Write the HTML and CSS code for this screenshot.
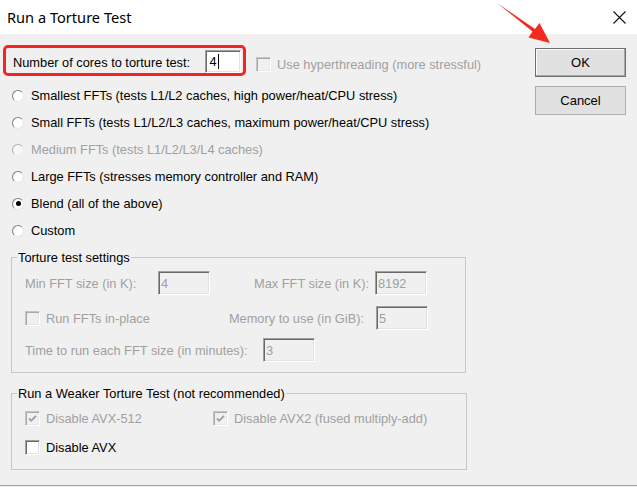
FILE: index.html
```html
<!DOCTYPE html>
<html>
<head>
<meta charset="utf-8">
<title>Run a Torture Test</title>
<link rel="stylesheet" href="styles.css">
</head>
<body>
<div class="window">
  <header class="titlebar">
    <span class="title">Run a Torture Test</span>
    <svg class="close" width="13" height="13" viewBox="0 0 13 13"><path d="M0.5 0.5L12.5 12.5M12.5 0.5L0.5 12.5" stroke="#111" stroke-width="1.1"/></svg>
  </header>
  <div class="content">
    <div class="main">
      <div class="cores-row">
        <div class="highlight">
          <span class="cores-label">Number of cores to torture test:</span>
          <span class="field active">4<span class="caret"></span></span>
        </div>
        <div class="check disabled ht"><span class="box"></span><span>Use hyperthreading (more stressful)</span></div>
      </div>
      <ul class="radios">
        <li class="radio"><span class="dot"></span><span>Smallest FFTs (tests L1/L2 caches, high power/heat/CPU stress)</span></li>
        <li class="radio"><span class="dot"></span><span>Small FFTs (tests L1/L2/L3 caches, maximum power/heat/CPU stress)</span></li>
        <li class="radio disabled"><span class="dot"></span><span>Medium FFTs (tests L1/L2/L3/L4 caches)</span></li>
        <li class="radio"><span class="dot"></span><span>Large FFTs (stresses memory controller and RAM)</span></li>
        <li class="radio checked"><span class="dot"></span><span>Blend (all of the above)</span></li>
        <li class="radio"><span class="dot"></span><span>Custom</span></li>
      </ul>
      <fieldset class="group settings">
        <legend>Torture test settings</legend>
        <div class="frow r1">
          <span class="lbl w-min">Min FFT size (in K):</span>
          <span class="field dis">4</span>
          <span class="lbl right w-max">Max FFT size (in K):</span>
          <span class="field dis">8192</span>
        </div>
        <div class="frow r2">
          <div class="check disabled w-inplace"><span class="box"></span><span>Run FFTs in-place</span></div>
          <span class="lbl right w-mem">Memory to use (in GiB):</span>
          <span class="field dis">5</span>
        </div>
        <div class="frow r3">
          <span class="lbl w-time">Time to run each FFT size (in minutes):</span>
          <span class="field dis">3</span>
        </div>
      </fieldset>
      <fieldset class="group weaker">
        <legend>Run a Weaker Torture Test (not recommended)</legend>
        <div class="crow c1">
          <div class="check disabled checked w-avx512"><span class="box"><svg width="13" height="13" viewBox="0 0 13 13"><path d="M3 6.5L5.2 8.7L10 3.9" fill="none" stroke="#a0a0a0" stroke-width="1.8"/></svg></span><span>Disable AVX-512</span></div>
          <div class="check disabled checked"><span class="box"><svg width="13" height="13" viewBox="0 0 13 13"><path d="M3 6.5L5.2 8.7L10 3.9" fill="none" stroke="#a0a0a0" stroke-width="1.8"/></svg></span><span>Disable AVX2 (fused multiply-add)</span></div>
        </div>
        <div class="crow c2">
          <div class="check"><span class="box"></span><span>Disable AVX</span></div>
        </div>
      </fieldset>
    </div>
    <div class="buttons">
      <button class="btn default">OK</button>
      <button class="btn">Cancel</button>
    </div>
  </div>
  <svg class="arrow" width="637" height="60" viewBox="0 0 637 60">
    <polygon points="497,3 535,29 539.5,23 550,43 528.5,37.5 532.5,31.5" fill="#f42a1e"/>
  </svg>
</div>
</body>
</html>
```
FILE: styles.css
```css
html, body {
  margin: 0;
  padding: 0;
  background: #f0f0f0;
}
body {
  font-family: "Liberation Sans", Arial, sans-serif;
  font-size: 12.8px;
  color: #000;
}
.window {
  position: relative;
  width: 637px;
  height: 487px;
  overflow: hidden;
}
.titlebar {
  height: 34px;
  background: #fff;
  display: flex;
  align-items: center;
  justify-content: space-between;
  padding: 0 11px 0 7px;
  box-sizing: border-box;
}
.title {
  font-family: "Noto Sans", "Open Sans", sans-serif;
  font-size: 14.6px;
  color: #000;
  margin-top: -1px;
}
.close {
  display: block;
  margin-top: 1px;
}
.content {
  height: 452px;
  box-sizing: border-box;
  border-bottom: 1px solid #a0a0a0;
  display: flex;
}
.main {
  flex: 1;
}
.cores-row {
  margin-top: 11px;
  height: 31px;
  display: flex;
  align-items: flex-start;
}
.highlight {
  margin-left: 3px;
  width: 243px;
  height: 31px;
  box-sizing: border-box;
  border: 3px solid #f52424;
  border-radius: 5px;
  display: flex;
  align-items: flex-start;
  padding: 2px 2px 0 7px;
}
.cores-label {
  padding-top: 5px;
  line-height: 15px;
  width: 195px;
}
.field {
  display: flex;
  align-items: center;
  box-sizing: border-box;
  width: 52px;
  height: 24px;
  padding-left: 2px;
  border: 1px solid;
  border-color: #a0a0a0 #fff #fff #a0a0a0;
  box-shadow: inset 1px 1px 0 #696969, inset -1px -1px 0 #e3e3e3;
  background: #f0f0f0;
  color: #a0a0a0;
  line-height: 15px;
}
.field.active {
  width: 36px;
  height: 23px;
  background: #fff;
  color: #000;
  padding-left: 3px;
}
.caret {
  display: inline-block;
  width: 0;
  height: 15px;
  border-left: 1px solid #000;
  margin-left: 1px;
}
.check {
  display: flex;
  align-items: center;
  line-height: 15px;
}
.check .box {
  width: 15px;
  height: 15px;
  box-sizing: border-box;
  border: 1px solid;
  border-color: #a0a0a0 #fff #fff #a0a0a0;
  box-shadow: inset 1px 1px 0 #696969, inset -1px -1px 0 #e3e3e3;
  background: #fff;
  margin-right: 6px;
  flex: none;
  display: flex;
  align-items: center;
  justify-content: center;
}
.check.disabled {
  color: #a0a0a0;
}
.check.disabled .box {
  background: #f0f0f0;
  border-color: #c4c4c4 #fff #fff #c4c4c4;
  box-shadow: inset 1px 1px 0 #a8a8a8, inset -1px -1px 0 #e8e8e8;
}
.check .box svg {
  display: block;
}
.ht {
  margin-left: 10px;
  margin-top: 12px;
}
.radios {
  list-style: none;
  margin: 6px 0 0 12px;
  padding: 0;
}
.radio {
  height: 27px;
  display: flex;
  align-items: center;
  line-height: 15px;
}
.radio .dot {
  width: 12px;
  height: 12px;
  box-sizing: border-box;
  border-radius: 50%;
  border: 1px solid;
  border-color: #7f7f7f #e6e6e6 #e6e6e6 #7f7f7f;
  background: #fff;
  margin-right: 7px;
  display: flex;
  align-items: center;
  justify-content: center;
  flex: none;
}
.radio.disabled {
  color: #a0a0a0;
}
.radio.disabled .dot {
  border-color: #b0b0b0 #ececec #ececec #b0b0b0;
  background: #f7f7f7;
}
.radio.checked .dot::after {
  content: "";
  width: 5px;
  height: 5px;
  border-radius: 50%;
  background: #000;
}
.group {
  margin: 6px 0 0 11px;
  padding: 6px 0 10px 13px;
  border: 1px solid #c6c6c6;
  width: 455px;
  box-sizing: border-box;
  min-width: 0;
}
.group legend {
  padding: 0 1px;
  margin-left: -8px;
  line-height: 15px;
  color: #000;
}
.frow {
  display: flex;
  align-items: center;
  height: 24px;
  line-height: 15px;
}
.lbl {
  color: #a0a0a0;
  flex: none;
}
.lbl.right {
  text-align: right;
}
.w-min { width: 133px; }
.w-max { width: 165px; padding-right: 6px; box-sizing: border-box; }
.w-inplace { width: 190px; flex: none; }
.w-mem { width: 161px; padding-right: 12px; box-sizing: border-box; }
.w-time { width: 238px; }
.r2 { margin-top: 11px; }
.r3 { margin-top: 8px; }
.weaker {
  margin-top: 13px;
  width: 456px;
  padding: 10px 0 14px 13px;
}
.crow {
  display: flex;
  height: 15px;
  align-items: center;
}
.c2 { margin-top: 14px; }
.w-avx512 { width: 188px; flex: none; }
.buttons {
  display: flex;
  flex-direction: column;
  gap: 9px;
  padding-top: 14px;
  margin-right: 11px;
}
.btn {
  width: 91px;
  height: 29px;
  box-sizing: border-box;
  border: 1px solid #adadad;
  background: #e1e1e1;
  font-family: "Liberation Sans", Arial, sans-serif;
  font-size: 13px;
  color: #000;
  padding: 0;
  margin: 0;
}
.btn.default {
  border-color: #6f6f6f;
  box-shadow: inset -1px -1px 0 #a8a8a8, inset 1px 1px 0 #fbfbfb;
}
.arrow {
  position: absolute;
  left: 0;
  top: 0;
  pointer-events: none;
}
```
